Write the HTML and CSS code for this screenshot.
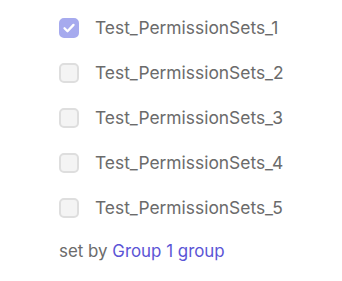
FILE: index.html
```html
<!DOCTYPE html>
<html>
<head>
<meta charset="utf-8">
<link rel="stylesheet" href="styles.css">
</head>
<body>
<div class="panel">
  <ul class="list">
    <li class="item"><span class="box checked"><svg viewBox="0 0 20 20" width="20" height="20"><path d="M5.5 10.3l3 3 6-6.4" fill="none" stroke="#fff" stroke-width="2.3" stroke-linecap="round" stroke-linejoin="round"/></svg></span><span class="label">Test_PermissionSets_1</span></li>
    <li class="item"><span class="box"></span><span class="label">Test_PermissionSets_2</span></li>
    <li class="item"><span class="box"></span><span class="label">Test_PermissionSets_3</span></li>
    <li class="item"><span class="box"></span><span class="label">Test_PermissionSets_4</span></li>
    <li class="item"><span class="box"></span><span class="label">Test_PermissionSets_5</span></li>
  </ul>
  <p class="note">set by <a class="link">Group 1 group</a></p>
</div>
</body>
</html>
```
FILE: styles.css
```css
html, body { margin: 0; padding: 0; background: #fff; }
body { font-family: Inter, "Noto Sans", sans-serif; }
.panel { padding: 18px 0 0 59px; }
.list { list-style: none; margin: 0; padding: 0; display: flex; flex-direction: column; gap: 25px; }
.item { display: flex; align-items: center; gap: 16px; height: 20px; }
.box { flex: none; width: 20px; height: 20px; box-sizing: border-box; border: 2px solid #dedede; border-radius: 5px; background: #f4f4f4; display: flex; align-items: center; justify-content: center; }
.box.checked { background: #a6aaee; border-color: #a6aaee; }
.box.checked svg { display: block; margin: -2px; }
.label { font-size: 17.4px; color: #6b6b6b; line-height: 18px; }
.note { margin: 23px 0 0; font-size: 16.9px; color: #6b6b6b; line-height: 20px; }
.link { color: #5b55d6; text-decoration: none; }
```
